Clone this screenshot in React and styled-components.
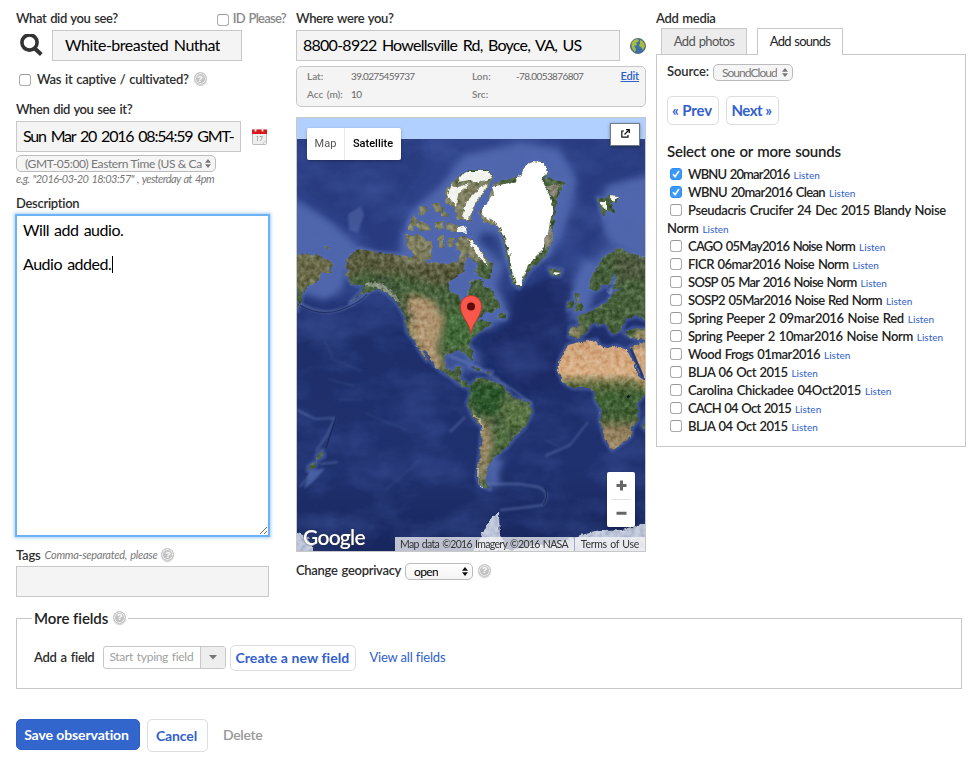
import React from 'react';
import styled, { createGlobalStyle, css } from 'styled-components';

const Global = createGlobalStyle`
  * { box-sizing: border-box; }
  body { margin: 0; background: #fff; color: #222; font: 400 13px/18px Lato, sans-serif; }
  input, textarea, button { font-family: inherit; margin: 0; }
`;

/* ---------- layout ---------- */
const Page = styled.main`
  width: 977px; height: 758px; overflow: hidden; padding: 8px 0 0 16px;
`;
const Columns = styled.div`display: flex; height: 589px; align-items: flex-start;`;
const Column = styled.section`
  width: ${p => p.$w}px; margin-right: ${p => p.$gap || 0}px; flex: none;
  display: flex; flex-direction: column;
`;
const Row = styled.div`
  display: flex; align-items: center; flex: none;
  height: ${p => p.$h}px; padding-top: ${p => p.$top || 0}px; padding-left: ${p => p.$left || 0}px;
`;
const Spacer = styled.span`flex: 1;`;

/* ---------- text ---------- */
const Text = styled.span`
  white-space: nowrap; color: ${p => p.$c || '#222'}; margin-bottom: 2px;
  font-size: ${p => p.$s || 13}px; font-weight: ${p => p.$b || 400};
  letter-spacing: ${p => p.$ls || 0}px; word-spacing: 1px;
`;
const Label = styled(Text).attrs({ as: 'label' })`font-weight: 600; color: #2d2d2d;`;
const Hint = styled(Text)`font-style: italic; font-size: 11px; color: #777;`;
const Link = styled.a`
  white-space: nowrap; color: #2f60cb; cursor: pointer; margin-bottom: 2px;
  font-size: ${p => p.$s || 13}px; letter-spacing: ${p => p.$ls || 0}px;
  margin-left: ${p => p.$ml || 0}px; text-decoration: ${p => (p.$u ? 'underline' : 'none')};
  font-weight: ${p => p.$b || 400};
`;

/* ---------- controls ---------- */
const Field = styled.input`
  width: ${p => p.$w}px; height: 31px; flex: none; border: 1px solid #c8c8c8; background: #f4f4f4;
  padding: 0 ${p => p.$pr || 6}px 2px ${p => p.$pl || 6}px; font-size: 16px; color: #000;
  letter-spacing: ${p => p.$ls || 0}px; word-spacing: 2px; outline: 0; margin-left: ${p => p.$ml || 0}px;
`;
const Box = styled.span`
  display: inline-flex; flex: none; width: 12px; height: 12px; border-radius: 3px; vertical-align: top;
  align-items: center; justify-content: center; margin: ${p => p.$mt || 0}px ${p => p.$mr || 6}px 0 3px;
  ${p => p.$on
    ? css`background: #3b99fc; border: 1px solid #2f8df2;`
    : css`background: #fff; border: 1px solid #aaa; border-top-color: #999;`}
`;
const SelectBox = styled.span`
  display: inline-flex; align-items: center; justify-content: space-between; flex: none;
  width: ${p => p.$w}px; height: 17px; border: 1px solid #bbb; border-radius: 5px;
  margin-left: ${p => p.$ml || 0}px; padding: 0 4px 0 8px; overflow: hidden;
  background: ${p => (p.$off ? '#f5f5f5' : 'linear-gradient(#fff, #f4f4f4)')};
  color: ${p => (p.$off ? '#777' : '#000')};
`;
const Clip = styled.span`
  overflow: hidden; white-space: nowrap; font-size: 12px; line-height: 15px;
  letter-spacing: ${p => p.$ls}px; width: ${p => (p.$w ? `${p.$w}px` : 'auto')};
`;
const Action = styled.button`
  height: ${p => p.$h}px; width: ${p => p.$w}px; margin-left: ${p => p.$ml || 0}px; flex: none;
  padding: 0 3px 1px 0; border-radius: 5px; font-weight: 700; font-size: ${p => p.$s || 14}px;
  letter-spacing: ${p => p.$ls || 0}px; white-space: nowrap;
  ${p => p.$primary
    ? css`background: #3366cc; color: #fff; border: 1px solid #2d5fc6;`
    : css`background: #fff; color: #3360cb; border: 1px solid #ddd; padding-right: 2px;`}
`;
const HelpDot = styled.span`
  display: inline-flex; align-items: center; justify-content: center; flex: none;
  width: 13px; height: 13px; border-radius: 50%; border: 1px solid #c2c2c2;
  margin: 0 0 2px ${p => p.$ml || 5}px;
  background: linear-gradient(#ccc, #bbb); color: #fff; font: 700 9px/10px "Liberation Sans", sans-serif;
  box-shadow: inset 0 0 0 1px #eee, 0 1px 1px #ccc;
`;
const Help = p => <HelpDot {...p}>?</HelpDot>;

const Arrows = ({ color = '#777' }) => (
  <svg width="6" height="9" viewBox="0 0 6 9"><path d="M3 0 6 3.7H0zM3 9 0 5.3H6z" fill={color} /></svg>
);

const Select = ({ children, off, ls, clip, ...rest }) => (
  <SelectBox $off={off} {...rest}>
    <Clip $ls={ls} $w={clip}>{children}</Clip>
    <Arrows color={off ? '#777' : '#111'} />
  </SelectBox>
);

const Check = ({ on }) => (
  <Box $on={on} $mt={3}>
    {on && <svg width="8" height="8" viewBox="0 0 8 8"><path d="M1 4.3 3.1 6.6 7 1" fill="none" stroke="#fff" strokeWidth="1.6" /></svg>}
  </Box>
);

/* ---------- description ---------- */
const AreaWrap = styled.div`
  position: relative; width: 253px; height: 321px; flex: none;
`;
const Area = styled.textarea`
  display: block; width: 100%; height: 100%; border: 1px solid #6cb0f5; outline: 0; resize: both;
  box-shadow: 0 0 0 1px #70b3f7, 0 0 3px 2px #a5cff8; padding: 5px 6px; font-size: 16px; line-height: 17px;
  color: #000; letter-spacing: -0.48px; word-spacing: 1.5px; overflow: hidden; background: #fff;
`;
const Caret = styled.i`position: absolute; left: 96px; top: 41px; width: 1px; height: 17px; background: #000;`;

/* ---------- coordinates ---------- */
const Coords = styled.div`
  display: grid; grid-template-columns: 44px 121px 44px 1fr auto; grid-auto-rows: 18px; align-items: center;
  height: 41px; margin-top: 5px; padding: 1px 6px 0 10px; background: #f4f4f4;
  border: 1px solid #c8c8c8; border-radius: 5px; flex: none;
`;
const Key = styled(Text)`color: #808080; font-size: 10px; font-weight: 600;`;
const Val = styled(Text)`color: #666; font-size: 10px;`;

/* ---------- map ---------- */
const MapFrame = styled.div`
  position: relative; width: 350px; height: 435px; margin-top: 10px; border: 1px solid #c8c8c8; flex: none;
  overflow: hidden; background: #1c2d69;
`;
const MapArt = styled.svg`display: block;`;
const MapTypes = styled.div`
  position: absolute; left: 10px; top: 10px; display: flex; width: 94px; height: 32px; background: #fff;
  border-radius: 2px; font: 400 11px/31px Roboto, sans-serif; box-shadow: 0 1px 3px rgba(0,0,0,.3);
`;
const MapType = styled.span`
  width: ${p => p.$w}px; text-align: center; color: ${p => (p.$on ? '#000' : '#565656')};
  font-weight: ${p => (p.$on ? 500 : 400)}; border-right: ${p => (p.$on ? 0 : '1px solid #e8e8e8')};
`;
const Expand = styled.div`
  position: absolute; right: 5px; top: 5px; width: 30px; height: 23px; background: #fff;
  border: 1px solid #717b87; display: flex; align-items: center; justify-content: center; padding-bottom: 2px;
  box-shadow: 0 1px 3px rgba(0,0,0,.4);
`;
const Zoom = styled.div`
  position: absolute; right: 10px; bottom: 24px; width: 28px; height: 55px; background: #fff; border-radius: 2px;
  display: flex; align-items: center; justify-content: center; box-shadow: 0 1px 3px rgba(0,0,0,.3);
`;
const Credits = styled.div`
  position: absolute; right: 0; bottom: 0; height: 14px; width: 250px; display: flex; align-items: center;
  background: rgba(245,245,245,.75); padding: 0 6px 0 5px; justify-content: space-between;
`;
const Credit = styled(Text)`font-size: 10.5px; line-height: 14px; color: #333; margin-bottom: 1px;`;
const Divider = styled.i`width: 1px; height: 14px; background: #a4acc5; margin-left: 1px;`;
const Logo = styled.span`
  position: absolute; left: 6px; bottom: 2px; color: #fff; font: 600 21px/25px Lato, sans-serif;
  letter-spacing: -0.75px; text-shadow: 0 0 2px #333;
`;

const LAND = {
  siberia: 'M296 255 310 254 320 256 327 260 334 265 329 268 331 273 323 273 317 282 310 285 304 290 301 300 297 311Z',
  america: 'M347 260 352 253 360 249 377 253 397 255 417 257 427 262 437 263 448 264 457 262 463 250 467 257 463 272 454 277 448 284 450 291 459 296 462 302 468 299 469 288 471 281 480 279 486 288 490 287 497 299 501 306 493 311 483 314 477 321 486 320 491 325 483 329 477 333 471 339 469 343 473 352 472 361 468 358 465 352 457 350 449 353 445 359 446 368 453 371 457 366 462 368 460 375 463 380 470 386 467 388 459 384 451 377 441 371 433 364 427 353 423 350 427 361 421 353 414 340 407 332 405 317 398 304 387 293 378 289 366 292 357 298 350 303 361 292 363 286 352 284 346 275 350 270 345 267Z',
  greenland: 'M491 193 494 184 504 180 518 177 524 168 530 162 543 162 550 173 544 178 566 182 559 193 556 207 554 223 551 240 548 253 538 263 528 273 523 282 519 288 513 283 509 267 506 250 501 233 496 225 484 222 479 212 488 203Z',
  ellesmere: 'M445 193 453 182 467 170 490 170 494 178 485 190 475 206 470 222 457 219 455 208 447 203Z',
  baffin: 'M457 237 470 238 480 250 493 267 488 280 475 273 478 265 463 251 456 250Z',
  victoria: 'M405 235 420 235 427 240 433 247 430 260 418 260 407 247Z',
  south: 'M470 385 478 378 490 380 503 385 512 397 530 403 532 412 525 427 515 437 507 447 497 455 490 463 487 473 486 484 490 489 480 485 477 477 480 453 482 427 473 417 467 403 470 395Z',
  africa: 'M558 370 560 359 568 345 580 342 597 340 598 345 607 348 616 346 627 350 635 366 638 376 646 382 646 393 637 403 638 420 632 428 631 436 623 443 612 450 605 440 600 420 601 410 595 400 595 391 590 388 573 388 563 382Z',
  arabia: 'M630 347 646 342 646 379 640 372Z',
  europe: 'M589 287 591 277 604 257 618 248 628 252 646 257 646 320 636 316 625 320 622 330 612 334 605 323 598 325 593 322 586 332 578 339 569 337 570 327 580 325 577 318 587 312 598 307 608 301 613 292 606 284 600 289 593 291Z',
  turkey: 'M624 333 634 328 646 329 646 340 632 338Z',
  britain: 'M574 293 580 294 579 302 584 309 575 311 576 302ZM568 303 573 301 573 308 568 310Z',
  iceland: 'M549 268 562 270 560 276 552 275Z',
  svalbard: 'M598 198 607 199 609 194 619 196 617 202 610 202 615 214 607 210 604 218 600 208Z',
  islands: 'M409 222 414 215 417 220 413 230 409 230ZM419 208 425 206 427 212 420 216ZM432 203 439 203 442 210 436 212ZM415 224 426 222 431 230 422 232ZM434 221 443 221 444 229 437 230ZM446 222 456 225 463 229 455 233 446 229ZM438 236 444 235 444 246 439 248ZM449 237 455 238 452 247 447 245ZM442 209 448 214 446 218 441 215ZM428 240 432 241 432 248ZM469 367 478 368 483 371 477 370ZM485 371 492 372 489 374ZM499 314 506 313 505 319 498 318ZM325 247 330 247 327 250ZM317 455 322 451 324 456 317 460ZM309 466 317 461 314 468 308 471ZM646 418 642 426 646 430Z',
};

const Land = props => Object.entries(LAND).map(([name, d]) => <path key={name} d={d} {...props} />);

const Terrain = () => (
  <MapArt width="348" height="433" viewBox="297 118 348 433">
    <defs>
      <linearGradient id="sea" x1="0" y1="0" x2="0" y2="1">
        <stop offset="0" stopColor="#30458c" /><stop offset=".38" stopColor="#2a3d82" />
        <stop offset=".5" stopColor="#1d2e6a" /><stop offset=".8" stopColor="#20316f" /><stop offset="1" stopColor="#17265d" />
      </linearGradient>
      <linearGradient id="africa" x1="0" y1="0" x2="0" y2="1">
        <stop offset="0" stopColor="#cfa278" /><stop offset=".3" stopColor="#d9b086" /><stop offset=".41" stopColor="#5d6a3c" />
        <stop offset=".52" stopColor="#3d6032" /><stop offset=".7" stopColor="#425f34" /><stop offset=".82" stopColor="#8c7a58" /><stop offset="1" stopColor="#a08a66" />
      </linearGradient>
      <filter id="b1" x="-30%" y="-30%" width="160%" height="160%"><feGaussianBlur stdDeviation="1" /></filter>
      <filter id="b4" x="-30%" y="-30%" width="160%" height="160%"><feGaussianBlur stdDeviation="3.5" /></filter>
      <filter id="rough" filterUnits="userSpaceOnUse" x="297" y="118" width="348" height="433" colorInterpolationFilters="sRGB">
        <feTurbulence type="fractalNoise" baseFrequency=".2" numOctaves="3" seed="4" result="n" />
        <feDisplacementMap in="SourceGraphic" in2="n" scale="5" xChannelSelector="R" yChannelSelector="G" result="d" />
        <feColorMatrix in="n" type="matrix" values=".8 0 0 0 .1  .8 0 0 0 .1  .8 0 0 0 .1  0 0 0 0 1" result="g" />
        <feBlend in="g" in2="d" mode="soft-light" result="m" />
        <feComposite in="m" in2="d" operator="in" />
      </filter>
      <filter id="water" filterUnits="userSpaceOnUse" x="297" y="139" width="348" height="412" colorInterpolationFilters="sRGB">
        <feTurbulence type="fractalNoise" baseFrequency=".02 .035" numOctaves="5" seed="12" />
        <feColorMatrix type="matrix" values="0 0 0 0 .32  0 0 0 0 .42  0 0 0 0 .72  1.4 0 0 0 -.55" />
      </filter>
      <clipPath id="landclip"><path d={Object.values(LAND).join('')} /></clipPath>
    </defs>

    <rect x="297" y="118" width="348" height="433" fill="url(#sea)" />

    <g fill="#5066ac" filter="url(#b4)">
      <path d="M290 198 315 211 335 225 350 240 365 250 400 255 400 238 412 210 440 186 465 155 520 143 560 150 577 175 580 205 560 240 548 258 520 270 505 262 497 285 512 318 480 330 430 275 400 260 350 262 342 290 325 300 290 290Z" />
      <path d="M598 186 650 175 650 270 616 246 600 262 590 250 602 230Z" />
      <path d="M584 260 600 262 590 310 570 322 560 308 570 290Z" />
      <path d="M487 455 505 460 498 472 500 485 486 487Z" />
      <path d="M445 348 480 348 482 372 444 374Z" opacity=".6" />
    </g>
    <g fill="#263a7c" filter="url(#b4)">
      <path d="M345 135 420 135 425 166 402 196 397 238 384 253 364 244 352 220 322 206 300 185 293 135Z" opacity=".75" />
      <path d="M553 135 650 135 650 168 607 184 600 225 612 245 595 258 585 245 560 250 570 210 578 180Z" opacity=".75" />
      <path d="M483 232 498 235 505 265 497 258 478 240Z" />
      <path d="M515 292 570 268 572 312 555 335 560 380 530 395 480 350 510 325Z" fill="#1b2b66" />
    </g>
    <path d="M348 214 361 206 364 215 358 233 349 230Z" fill="#5267a7" opacity=".6" filter="url(#b1)" />
    <rect x="297" y="139" width="348" height="412" filter="url(#water)" opacity=".5" />

    <g fill="none" strokeLinejoin="round">
      <g stroke="#526bb4" strokeWidth="5" opacity=".55" filter="url(#b1)"><Land /></g>
      <g stroke="#7890c8" opacity=".4" filter="url(#b1)">
        <path d="M297 301Q315 315 335 311T369 292" strokeWidth="3" />
        <path d="M450 356 470 364 488 373 500 380M490 376 512 389 532 404M487 484 520 484 538 487Q552 492 543 505L520 508 500 510" strokeWidth="2.5" />
        <path d="M297 410 315 419 335 418 327 435 316 451M312 472 300 487M320 464 338 462M465 417 450 432M588 422 570 445 545 456" strokeWidth="2" />
      </g>
      <path d="M300 305Q320 317 340 310T367 294M336 417 326 448M545 488Q549 497 543 505" stroke="#101a45" strokeWidth="1.2" opacity=".6" />
    </g>
    <path d="M310 471 325 468 316 479 304 489Z" fill="#5570b4" opacity=".7" filter="url(#b1)" />
    <path d="M330 358 362 371M328 379 354 386M365 413 407 430M324 340 333 357M338 400 362 400M420 460 386 490M545 440 560 447" stroke="#5d78b2" strokeWidth="1.5" opacity=".2" filter="url(#b1)" />

    <g filter="url(#rough)">
      <Land fill="#46603a" />
      <path d={LAND.africa} fill="url(#africa)" />
      <g clipPath="url(#landclip)">
        <g filter="url(#b4)">
          <path d="M290 250H345V290H290Z" fill="#6b6b48" />
          <path d="M345 248H468V280L440 286 400 275 365 272 345 280Z" fill="#5a5b3e" />
          <path d="M396 180H500V262H396Z" fill="#7f7f5e" />
          <path d="M408 294 433 300 443 318 437 350 446 370 428 366 410 335Z" fill="#b09470" />
          <path d="M370 270 395 282 405 304 415 320 405 325 390 300 375 290Z" fill="#3f5639" />
          <path d="M445 310 484 310 480 340 450 350 440 335Z" fill="#456c3b" />
          <path d="M468 383 500 385 510 405 490 416 474 410Z" fill="#2c562a" />
          <path d="M500 400 535 405 525 430 507 428Z" fill="#5b7545" />
          <path d="M482 420 489 423 491 445 487 465 484 482 478 479Z" fill="#ae9370" />
          <path d="M497 430 505 430 505 448 493 453Z" fill="#52703f" />
          <path d="M628 344H650V392L642 386Z" fill="#d6aa80" />
          <path d="M635 330H650V341H635Z" fill="#ab976c" />
          <path d="M568 325H582V340H568Z" fill="#8a835e" />
          <path d="M612 255H650V280H620Z" fill="#4d593e" />
        </g>
        <path d="M365 285 374 280 386 286 396 296 402 305 395 300 383 290Z" fill="#cfd1c7" opacity=".5" />
      </g>
      <path d="M610 299 606 289 611 282 614 272 617 281 612 289 622 289 613 293Z" fill="#4b62a2" />
      <path d="M494 193 492 187 516 181 524 168 531 162 543 163 549 172 541 178 548 192 553 207 549 228 546 240 541 252 528 265 521 285 516 285 512 270 508 248 502 232 495 222 484 217 481 211Z" fill="#fff" />
      <path d="M457 182 466 171 489 171 492 178 478 183 470 180ZM447 195 452 184 459 190 456 206ZM480 188 488 184 475 204 468 221 462 216 467 201ZM458 187 470 184 458 194ZM457 228 466 226 467 233 458 232ZM468 239 477 246 489 266 480 259ZM600 202 606 202 606 210ZM609 195 619 196 614 201ZM554 272 561 273 555 275Z" fill="#f3f4ef" />
      <path d="M546 186 560 184 555 198 551 195ZM551 225 553 240 546 250 544 240Z" fill="#8a8775" />
      <path d="M473 415 480 419 483 430" stroke="#b6a88e" strokeWidth="2" fill="none" />
      <path d="M478 468 478 484 484 488" stroke="#dce0db" strokeWidth="1" fill="none" />
      <ellipse cx="628" cy="397" rx="2" ry="2" fill="#0a1120" />
      <path d="M473 551 482 535 488 522 499 512 500 535 508 551ZM505 551 530 545 560 543 580 535 600 531 622 530 650 521V555H505ZM290 530 306 536 313 545 313 555H290Z" fill="#bdc6d9" />
    </g>
    <path d="M631 349 643 377" stroke="#243a73" strokeWidth="2.5" />

    <rect x="297" y="118" width="348" height="21" fill="#b1d0ff" />
    <path d="M471 334C469.500 322 460.500 317 460.500 306A10.500 10.500 0 0 1 481.500 306C481.500 317 472.500 322 471 334Z" fill="#f9574c" stroke="#b5352f" strokeWidth=".8" />
    <circle cx="471" cy="306.500" r="4" fill="#5c0d0c" />
  </MapArt>
);

/* ---------- media ---------- */
const Tabs = styled.div`display: flex; gap: 10px; padding-left: 5px; height: 27px; margin-bottom: -1px; z-index: 1;`;
const Tab = styled.div`
  width: 86px; height: ${p => (p.$on ? 27 : 26)}px; text-align: center; line-height: 25px;
  border: 1px solid #c8c8c8; border-bottom: 0; background: ${p => (p.$on ? '#fff' : '#ececec')};
`;
const Panel = styled.div`
  width: 310px; height: 393px; border: 1px solid #c8c8c8; padding: 8px 10px 0;
`;
const Heading = styled.h3`
  margin: 0; height: 40px; padding-top: 17px; font: 600 15px/18px Lato, sans-serif;
  letter-spacing: -.22px; word-spacing: 1px;
`;
const Sound = styled.div`
  line-height: 18px; font-weight: 600; letter-spacing: ${p => p.$ls}px; word-spacing: 1px;
`;
const Listen = styled.a`
  font-size: 10px; font-weight: 400; line-height: 10px; letter-spacing: 0; margin-left: 4px; color: #2f60cb;
`;

const SOUNDS = [
  ['WBNU 20mar2016', -.84, true],
  ['WBNU 20mar2016 Clean', -.65, true],
  ['Pseudacris Crucifer 24 Dec 2015 Blandy Noise Norm', -.35],
  ['CAGO 05May2016 Noise Norm', -.76],
  ['FICR 06mar2016 Noise Norm', -.53],
  ['SOSP 05 Mar 2016 Noise Norm', -.7],
  ['SOSP2 05Mar2016 Noise Red Norm', -.65],
  ['Spring Peeper 2 09mar2016 Noise Red', -.34],
  ['Spring Peeper 2 10mar2016 Noise Norm', -.38],
  ['Wood Frogs 01mar2016', -.5],
  ['BLJA 06 Oct 2015', -.56],
  ['Carolina Chickadee 04Oct2015', -.33],
  ['CACH 04 Oct 2015', -.77],
  ['BLJA 04 Oct 2015', -.56],
];

/* ---------- footer ---------- */
const MoreFields = styled.fieldset`
  width: 946px; height: 80px; margin: 12px 0 0; padding: 0 15px; border: 1px solid #c8c8c8;
`;
const Legend = styled.legend`
  display: flex; align-items: center; height: 18px; padding: 0 2px;
  font-size: 15px; line-height: 17px; font-weight: 600; letter-spacing: -.07px;
`;
const Combo = styled.div`
  display: flex; width: 123px; height: 23px; margin: 0 4px 0 9px; border: 1px solid #c8c8c8; border-radius: 3px;
  line-height: 20px; padding-left: 5px; justify-content: space-between;
`;
const ComboToggle = styled.span`
  width: 25px; background: #eee; border-left: 1px solid #c8c8c8; display: flex; justify-content: center; padding-top: 8px;
`;
const Buttons = styled.div`display: flex; align-items: flex-start; margin-top: 30px;`;
const DeleteLink = styled(Link)`color: #999; line-height: 32px; font-weight: 600; margin-left: 15px;`;

const SearchIcon = () => (
  <svg width="24" height="24" viewBox="0 1 24 24" fill="none" stroke="#333">
    <circle cx="9.500" cy="9.500" r="7.600" strokeWidth="3.600" /><path d="m14.800 15.500 6.500 6" strokeWidth="4" />
  </svg>
);
const CalendarIcon = () => (
  <svg width="15" height="17" viewBox="0 0 15 17">
    <rect x=".5" y="2" width="14" height="14.500" rx="1" fill="#eee" stroke="#bbb" />
    <path d="M0 1.500H15V6H0Z" fill="#d8161b" />
    <path d="M3.500 0v3.500M10.500 0v3.500" stroke="#eee" strokeWidth="1.800" />
    <path d="m4.500 9 1-1v5M7.500 8.500h3l-2 4.500" fill="none" stroke="#aaa" strokeWidth="1" />
    <path d="M11 16.500q0-3 3.500-3.500" fill="#fff" stroke="#bbb" strokeWidth=".8" />
  </svg>
);
const GlobeIcon = () => (
  <svg width="16" height="16" viewBox="0 0 16 16">
    <circle cx="8" cy="8" r="7.500" fill="#3e70a8" stroke="#5b6f78" />
    <path d="M1.500 5Q4 1 8 1L9 3 6 5 7 7 4 8 6 11 5 14Q1 11 1.500 5ZM10 2Q14 3 15 8L13 12 11 9 9 8 10 5Z" fill="#a9bd3c" />
  </svg>
);

export default function App() {
  return (
    <Page>
      <Global />
      <Columns>
        <Column $w={270} $gap={10}>
          <Row $h={22}>
            <Label $ls={-.41}>What did you see?</Label><Spacer />
            <Box $mt={2} $mr={4} /><Text $c="#888" $ls={-.73} $b={600}>ID Please?</Text>
          </Row>
          <Row $h={31} $left={4}><SearchIcon /><Field $w={190} $pl={12} $pr={21} $ml={8} $ls={-.5} readOnly defaultValue="White-breasted Nuthatch" /></Row>
          <Row $h={37}><Box $mt={1} /><Label $ls={-.3}>Was it captive / cultivated?</Label><Help /></Row>
          <Row $h={23}><Label $ls={-.4}>When did you see it?</Label></Row>
          <Row $h={31}><Field $w={225} $ls={-1.2} readOnly defaultValue="Sun Mar 20 2016 08:54:59 GMT-" /><Row $h={17} $left={11}><CalendarIcon /></Row></Row>
          <Row $h={20} $top={3}><Select $w={200} off ls={-.39} clip={178}>(GMT-05:00) Eastern Time (US &amp; Ca</Select></Row>
          <Row $h={15}><Hint $ls={-.56}>e.g. "2016-03-20 18:03:57" , yesterday at 4pm</Hint></Row>
          <Row $h={28} $top={5}><Label $ls={-.3}>Description</Label></Row>
          <AreaWrap><Area readOnly defaultValue={'Will add audio.\n\nAudio added.'} /><Caret /></AreaWrap>
          <Row $h={30} $top={9}><Label $ls={-.2}>Tags&nbsp;</Label><Hint $ls={-.27}>Comma-separated, please</Hint><Help $ml={4} /></Row>
          <Field $w={253} readOnly />
        </Column>

        <Column $w={350} $gap={10}>
          <Row $h={22}><Label $ls={-.35}>Where were you?</Label></Row>
          <Row $h={31}><Field $w={324} $ls={-.74} readOnly defaultValue="8800-8922 Howellsville Rd, Boyce, VA, US" /><Spacer /><GlobeIcon /></Row>
          <Coords>
            <Key>Lat:</Key><Val $ls={-.65}>39.0275459737</Val><Key>Lon:</Key><Val $ls={-.6}>-78.0053876807</Val><Link $s={11} $u $b={600} $ls={-.14}>Edit</Link>
            <Key>Acc (m):</Key><Val $ls={-.6}>10</Val><Key>Src:</Key>
          </Coords>
          <MapFrame>
            <Terrain />
            <MapTypes><MapType $w={38}>Map</MapType><MapType $w={56} $on>Satellite</MapType></MapTypes>
            <Expand>
              <svg width="9" height="9" viewBox="0 0 9 9" fill="none" stroke="#111" strokeWidth="1.200"><path d="M3 2H.8v6.200H7V6M3.500 5.500 8 1M5 .7h3.300V4" /></svg>
            </Expand>
            <Zoom>
              <svg width="20" height="41" viewBox="0 0 20 41"><path d="M9 1.500h3v3.500h3.500v3H12v3.500H9V8H5.500V5H9zM5.500 32.800h10v3h-10z" fill="#666" /><path d="M0 20.500h20" stroke="#e2e2e2" /></svg>
            </Zoom>
            <Logo>Google</Logo>
            <Credits><Credit $ls={-.66}>Map data ©2016 Imagery ©2016 NASA</Credit><Divider /><Credit $ls={-.3}>Terms of Use</Credit></Credits>
          </MapFrame>
          <Row $h={38}><Label $ls={-.3}>Change geoprivacy</Label><Select $w={68} $ml={4} ls={-.64}>open</Select><Help /></Row>
        </Column>

        <Column $w={310}>
          <Row $h={20} $top={1}><Label $ls={-.33}>Add media</Label></Row>
          <Tabs>
            <Tab><Text $ls={-.65} $c="#555">Add photos</Text></Tab>
            <Tab $on><Text $ls={-.75}>Add sounds</Text></Tab>
          </Tabs>
          <Panel>
            <Row $h={18}><Label $ls={-.1}>Source:</Label><Select $w={80} $ml={4} off ls={-.95}>SoundCloud</Select></Row>
            <Row $h={44} $top={15}><Action $w={52} $h={29} $s={15} $ls={-.13}>« Prev</Action><Action $w={53} $h={29} $ml={7} $s={15} $ls={-.52}>Next »</Action></Row>
            <Heading>Select one or more sounds</Heading>
            {SOUNDS.map(([name, ls, on]) => (
              <Sound key={name} $ls={ls}><Check on={on} />{name}<Listen>Listen</Listen></Sound>
            ))}
          </Panel>
        </Column>
      </Columns>

      <MoreFields>
        <Legend>More fields<Help /></Legend>
        <Row $h={61} $left={2}>
          <Label $ls={-.3}>Add a field</Label>
          <Combo>
            <Text $s={12} $ls={-.3} $c="#a0a0a0">Start typing field</Text>
            <ComboToggle><svg width="8" height="5"><path d="M0 0h8L4 4.500z" fill="#777" /></svg></ComboToggle>
          </Combo>
          <Action $w={126} $h={26} $ls={.08}>Create a new field</Action>
          <Link $ml={13} $ls={-.16}>View all fields</Link>
        </Row>
      </MoreFields>
      <Buttons>
        <Action $primary $w={124} $h={31} $ls={-.1}>Save observation</Action>
        <Action $w={61} $h={33} $ml={7} $ls={-.14}>Cancel</Action>
        <DeleteLink $s={14} $ls={-.33}>Delete</DeleteLink>
      </Buttons>
    </Page>
  );
}
